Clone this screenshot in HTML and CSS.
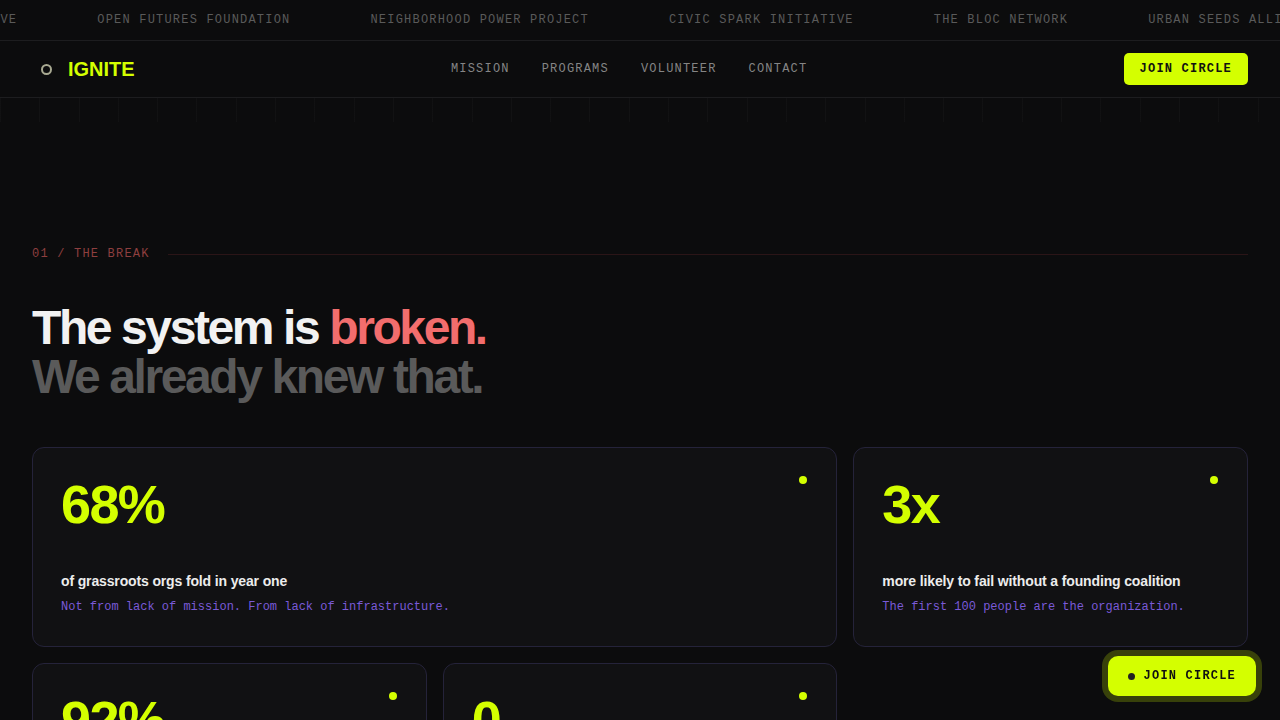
FILE: index.html
```html
<!DOCTYPE html>
<html lang="en">
<head>
    <meta charset="UTF-8">
    <meta name="viewport" content="width=device-width, initial-scale=1.0">
    <title>Ignite</title>
    <link rel="stylesheet" href="styles.css">
</head>
<body>
    <div class="ticker">
        <div class="ticker-track">
            <span class="ticker-item">COMMONS COLLECTIVE</span>
            <span class="ticker-item">OPEN FUTURES FOUNDATION</span>
            <span class="ticker-item">NEIGHBORHOOD POWER PROJECT</span>
            <span class="ticker-item">CIVIC SPARK INITIATIVE</span>
            <span class="ticker-item">THE BLOC NETWORK</span>
            <span class="ticker-item">URBAN SEEDS ALLIANCE</span>
            <span class="ticker-item">COMMONS COLLECTIVE</span>
        </div>
    </div>

    <nav class="nav">
        <a class="logo" href="#">
            <span class="logo-mark"><span class="logo-ring"></span></span>
            IGNITE
        </a>
        <div class="nav-links">
            <a href="#mission">MISSION</a>
            <a href="#programs">PROGRAMS</a>
            <a href="#volunteer">VOLUNTEER</a>
            <a href="#contact">CONTACT</a>
        </div>
        <a class="btn-join" href="#join">JOIN CIRCLE</a>
    </nav>
    <div class="ruler"></div>

    <section class="section" id="mission">
        <div class="section-label">
            <span>01 / THE BREAK</span>
            <span class="section-line"></span>
        </div>
        <h1 class="headline">
            The system is <span class="accent">broken.</span><br>
            <span class="muted">We already knew that.</span>
        </h1>

        <div class="stats">
            <div class="stat-card wide">
                <span class="stat-dot"></span>
                <div class="stat-num">68%</div>
                <div class="stat-label">of grassroots orgs fold in year one</div>
                <div class="stat-note">Not from lack of mission. From lack of infrastructure.</div>
            </div>
            <div class="stat-card">
                <span class="stat-dot"></span>
                <div class="stat-num">3x</div>
                <div class="stat-label">more likely to fail without a founding coalition</div>
                <div class="stat-note">The first 100 people are the organization.</div>
            </div>
            <div class="stat-card">
                <span class="stat-dot"></span>
                <div class="stat-num">92%</div>
                <div class="stat-label">of volunteers never get a second ask</div>
                <div class="stat-note">Momentum dies in the inbox.</div>
            </div>
            <div class="stat-card">
                <span class="stat-dot"></span>
                <div class="stat-num">0</div>
                <div class="stat-label">tools built for people starting from zero</div>
                <div class="stat-note">So we built one.</div>
            </div>
        </div>
    </section>

    <a class="float-join" href="#join"><span class="float-dot"></span>JOIN CIRCLE</a>
</body>
</html>
```

FILE: styles.css
```css
* {
    box-sizing: border-box;
}
body {
    margin: 0;
    background-color: #0c0c0d;
    color: #f0f0f0;
    font-family: "Liberation Sans", Arial, sans-serif;
    overflow: hidden;
}
a {
    text-decoration: none;
    color: inherit;
}

/* partner marquee */
.ticker {
    height: 41px;
    border-bottom: 1px solid #1d1d1f;
    overflow: hidden;
    white-space: nowrap;
}
.ticker-track {
    display: flex;
    height: 40px;
    align-items: center;
    transform: translateX(-174px);
}
.ticker-item {
    padding: 0 40px;
    font-family: "Liberation Mono", monospace;
    font-size: 12px;
    letter-spacing: 0.1em;
    color: #5a5a5a;
}

/* top nav */
.nav {
    display: flex;
    justify-content: space-between;
    align-items: center;
    height: 57px;
    padding: 0 32px;
    border-bottom: 1px solid #1d1d1f;
}
.logo {
    display: flex;
    align-items: center;
    gap: 8px;
    font-size: 20px;
    font-weight: bold;
    color: #d4ff00;
}
.logo-mark {
    width: 28px;
    height: 28px;
    display: flex;
    align-items: center;
    justify-content: center;
}
.logo-ring {
    width: 11px;
    height: 11px;
    border: 2px solid #a9aa92;
    border-radius: 50%;
}
.nav-links {
    display: flex;
    gap: 32px;
}
.nav-links a {
    font-family: "Liberation Mono", monospace;
    font-size: 12px;
    letter-spacing: 0.1em;
    color: #858585;
}
.btn-join {
    display: flex;
    align-items: center;
    height: 32px;
    padding: 0 16px;
    background-color: #d4ff00;
    color: #111;
    border-radius: 5px;
    font-family: "Liberation Mono", monospace;
    font-size: 12px;
    font-weight: bold;
    letter-spacing: 0.1em;
}

.ruler {
    height: 24px;
    background-image: repeating-linear-gradient(90deg, rgba(255, 255, 255, 0.025) 0 1px, transparent 1px 39.3px);
}

/* section */
.section {
    padding: 124px 32px 0;
}
.section-label {
    display: flex;
    align-items: center;
    gap: 18px;
    font-family: "Liberation Mono", monospace;
    font-size: 12px;
    letter-spacing: 0.1em;
    color: #8e3f3f;
    line-height: 16px;
}
.section-line {
    flex: 1;
    height: 1px;
    background-color: #2b1517;
}
.headline {
    margin: 41px 0 0;
    font-size: 48px;
    line-height: 49px;
    font-weight: bold;
    letter-spacing: -0.05em;
    color: #f2f2f2;
}
.accent {
    color: #f26d6d;
}
.muted {
    color: #5a5a5a;
}

.stats {
    display: grid;
    grid-template-columns: repeat(3, 1fr);
    gap: 16px;
    margin-top: 46px;
}
.stat-card {
    position: relative;
    min-height: 200px;
    padding: 28px 28px 30px;
    background-color: #111113;
    border: 1px solid #25233a;
    border-radius: 12px;
}
.stat-card.wide {
    grid-column: span 2;
}
.stat-dot {
    position: absolute;
    top: 28px;
    right: 29px;
    width: 8px;
    height: 8px;
    border-radius: 50%;
    background-color: #d4ff00;
}
.stat-num {
    font-size: 54px;
    line-height: 56px;
    font-weight: bold;
    letter-spacing: -0.03em;
    color: #d4ff00;
}
.stat-label {
    margin-top: 39px;
    font-size: 14px;
    line-height: 20px;
    font-weight: bold;
    letter-spacing: -0.01em;
    color: #ececec;
}
.stat-note {
    margin-top: 7px;
    font-family: "Liberation Mono", monospace;
    font-size: 12px;
    line-height: 18px;
    color: #7a5ad8;
}

/* sticky call to action */
.float-join {
    position: fixed;
    right: 24px;
    bottom: 24px;
    display: flex;
    align-items: center;
    gap: 9px;
    height: 40px;
    padding: 0 20px;
    background-color: #d4ff00;
    color: #111;
    border-radius: 10px;
    box-shadow: 0 0 0 6px rgba(212, 255, 0, 0.22);
    font-family: "Liberation Mono", monospace;
    font-size: 12px;
    font-weight: bold;
    letter-spacing: 0.1em;
}
.float-dot {
    width: 7px;
    height: 7px;
    border-radius: 50%;
    background-color: #222;
}
```
